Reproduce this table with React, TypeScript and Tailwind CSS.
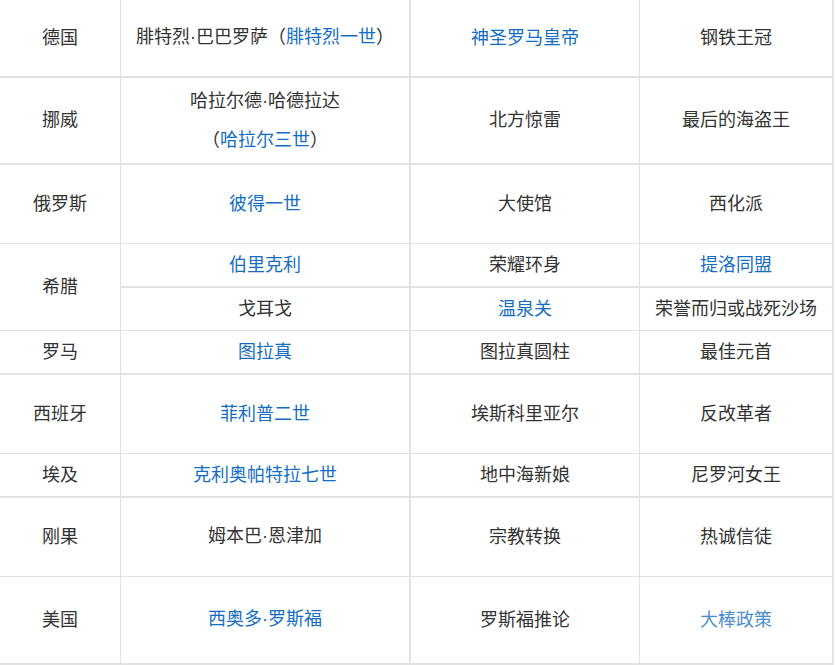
import React from "react";

const BLUE = "text-[#136ec2]";

type CellProps = {
  col: 1 | 2 | 3 | 4;
  thick: boolean;
  span?: boolean;
  children: React.ReactNode;
};

function Cell({ col, thick, span, children }: CellProps) {
  const right = col === 2 || col === 4 ? "border-r-2" : "border-r";
  const bottom = thick ? "border-b-2" : "border-b";
  return (
    <div
      className={`flex flex-col items-center justify-center text-center pb-[4px] border-[#e2e2e2] ${right} ${bottom} ${span ? "row-span-2" : ""}`}
    >
      {children}
    </div>
  );
}

const L = ({ children }: { children: React.ReactNode }) => (
  <span className={BLUE}>{children}</span>
);

const Dot = () => <span className="font-['Liberation_Sans',sans-serif]">·</span>;

export default function App() {
  return (
    <div className="w-[835px] h-[665px] bg-white overflow-hidden">
      <div className="grid grid-cols-[121px_290px_229px_194px] grid-rows-[78px_87px_79px_44px_43px_44px_79px_44px_79px_88px] text-[18px] leading-[37px] text-[#333333] font-['Noto_Sans_CJK_SC','Microsoft_YaHei',sans-serif]">
        {/* 德国 */}
        <Cell col={1} thick>德国</Cell>
        <Cell col={2} thick>
          <div>
            腓特烈<Dot />巴巴罗萨（<L>腓特烈一世</L>）
          </div>
        </Cell>
        <Cell col={3} thick><L>神圣罗马皇帝</L></Cell>
        <Cell col={4} thick>钢铁王冠</Cell>

        {/* 挪威 */}
        <Cell col={1} thick>挪威</Cell>
        <Cell col={2} thick>
          <div>哈拉尔德<Dot />哈德拉达</div>
          <div>
            （<L>哈拉尔三世</L>）
          </div>
        </Cell>
        <Cell col={3} thick>北方惊雷</Cell>
        <Cell col={4} thick>最后的海盗王</Cell>

        {/* 俄罗斯 */}
        <Cell col={1} thick={false}>俄罗斯</Cell>
        <Cell col={2} thick={false}><L>彼得一世</L></Cell>
        <Cell col={3} thick={false}>大使馆</Cell>
        <Cell col={4} thick={false}>西化派</Cell>

        {/* 希腊 */}
        <Cell col={1} thick={false} span>希腊</Cell>
        <Cell col={2} thick><L>伯里克利</L></Cell>
        <Cell col={3} thick>荣耀环身</Cell>
        <Cell col={4} thick><L>提洛同盟</L></Cell>
        <Cell col={2} thick={false}>戈耳戈</Cell>
        <Cell col={3} thick={false}><L>温泉关</L></Cell>
        <Cell col={4} thick={false}>荣誉而归或战死沙场</Cell>

        {/* 罗马 */}
        <Cell col={1} thick>罗马</Cell>
        <Cell col={2} thick><L>图拉真</L></Cell>
        <Cell col={3} thick>图拉真圆柱</Cell>
        <Cell col={4} thick>最佳元首</Cell>

        {/* 西班牙 */}
        <Cell col={1} thick={false}>西班牙</Cell>
        <Cell col={2} thick={false}><L>菲利普二世</L></Cell>
        <Cell col={3} thick={false}>埃斯科里亚尔</Cell>
        <Cell col={4} thick={false}>反改革者</Cell>

        {/* 埃及 */}
        <Cell col={1} thick>埃及</Cell>
        <Cell col={2} thick><L>克利奥帕特拉七世</L></Cell>
        <Cell col={3} thick>地中海新娘</Cell>
        <Cell col={4} thick>尼罗河女王</Cell>

        {/* 刚果 */}
        <Cell col={1} thick={false}>刚果</Cell>
        <Cell col={2} thick={false}>
          <div>姆本巴<Dot />恩津加</div>
        </Cell>
        <Cell col={3} thick={false}>宗教转换</Cell>
        <Cell col={4} thick={false}>热诚信徒</Cell>

        {/* 美国 */}
        <Cell col={1} thick>美国</Cell>
        <Cell col={2} thick>
          <div><L>西奥多<Dot />罗斯福</L></div>
        </Cell>
        <Cell col={3} thick>罗斯福推论</Cell>
        <Cell col={4} thick><span className="text-[#136ec2]/80">大棒政策</span></Cell>
      </div>
    </div>
  );
}
